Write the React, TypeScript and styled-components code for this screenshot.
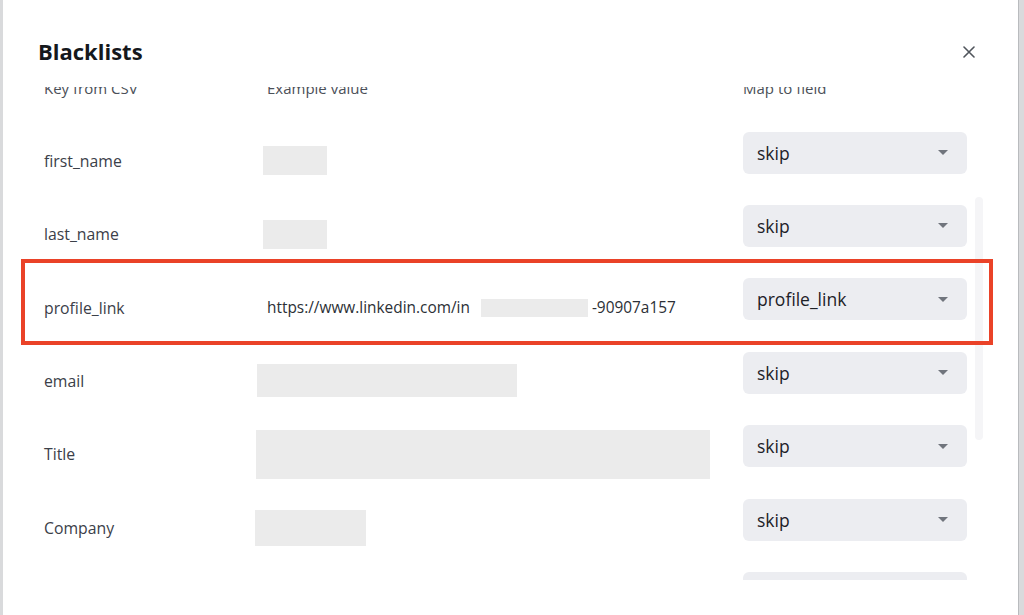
import React, { useLayoutEffect, useRef } from 'react'
import styled, { createGlobalStyle } from 'styled-components'

const GlobalStyle = createGlobalStyle`
  html, body {
    margin: 0;
    height: 100%;
    overflow: hidden;
  }
  body {
    background: #d9dadc;
    font-family: 'Open Sans', 'Noto Sans', sans-serif;
  }
`

const Backdrop = styled.div`
  height: 615px;
  display: flex;
  padding: 0 6px 0 3px;
`

const Modal = styled.div`
  position: relative;
  flex: 1;
  background: #ffffff;
  display: flex;
  flex-direction: column;
  box-shadow: 1px 0 0 #b9bbbe;
`

const Header = styled.div`
  display: flex;
  align-items: center;
  justify-content: space-between;
  padding: 36px 43px 21px 35px;
`

const Title = styled.h1`
  margin: 0;
  font-size: 22px;
  line-height: 30px;
  font-weight: 700;
  color: #15181c;
`

const CloseButton = styled.button`
  border: 0;
  background: none;
  padding: 0;
  margin-top: 1px;
  width: 12px;
  height: 12px;
  display: flex;
  cursor: pointer;
`

const Body = styled.div`
  height: 493px;
  overflow: hidden;
  padding: 0 51px 0 41px;
`

const Table = styled.div`
  display: grid;
  grid-template-columns: 223px 476px 224px;
`

const HeadCell = styled.div`
  height: 48.6px;
  padding-top: 2px;
  box-sizing: border-box;
  font-size: 15px;
  line-height: 22px;
  color: #4b5058;
`

const Cell = styled.div`
  height: 73.4px;
  display: flex;
  align-items: center;
  padding-top: 1px;
  box-sizing: border-box;
  font-size: 15.8px;
  color: #3b4049;
`

const ValueCell = styled(Cell)`
  font-size: 15.4px;
  color: #2c3036;
`

const SelectCell = styled.div`
  height: 73.4px;
  padding-top: 8px;
  box-sizing: border-box;
`

const Select = styled.div`
  height: 42px;
  border-radius: 6px;
  background: #ecedf1;
  display: flex;
  align-items: center;
  justify-content: space-between;
  padding: 0 19px 0 14px;
  font-size: 17.5px;
  color: #1d2127;
`

const Caret = styled.span`
  width: 0;
  height: 0;
  border-left: 5.5px solid transparent;
  border-right: 5.5px solid transparent;
  border-top: 5.5px solid #70757d;
`

const Redacted = styled.span<{ $w: number; $h: number; $shift: number }>`
  display: inline-block;
  width: ${p => p.$w}px;
  height: ${p => p.$h}px;
  margin-left: ${p => p.$shift}px;
  background: #ebebeb;
`

const InlineRedacted = styled.span`
  display: inline-block;
  width: 107px;
  height: 18px;
  margin: 0 4px 0 11px;
  background: #ebebeb;
`

const Highlight = styled.div`
  position: absolute;
  left: 18px;
  top: 259px;
  width: 972px;
  height: 86px;
  box-sizing: border-box;
  border: 4px solid #ea4228;
  pointer-events: none;
`

const ScrollThumb = styled.div`
  position: absolute;
  left: 972px;
  top: 197px;
  width: 8px;
  height: 243px;
  border-radius: 4px;
  background: #f5f5f7;
`

type Row = {
  key: string
  field: string
  value?: React.ReactNode
}

const rows: Row[] = [
  { key: 'first_name', field: 'skip', value: <Redacted $w={64} $h={29} $shift={-4} /> },
  { key: 'last_name', field: 'skip', value: <Redacted $w={64} $h={29} $shift={-4} /> },
  {
    key: 'profile_link',
    field: 'profile_link',
    value: (
      <>
        https://www.linkedin.com/in
        <InlineRedacted />
        -90907a157
      </>
    )
  },
  { key: 'email', field: 'skip', value: <Redacted $w={260} $h={33} $shift={-10} /> },
  { key: 'Title', field: 'skip', value: <Redacted $w={454} $h={49} $shift={-11} /> },
  { key: 'Company', field: 'skip', value: <Redacted $w={111} $h={36} $shift={-12} /> },
  { key: 'Location', field: 'skip', value: <Redacted $w={140} $h={29} $shift={-10} /> },
  { key: 'Industry', field: 'skip', value: <Redacted $w={120} $h={29} $shift={-10} /> }
]

export default function App () {
  const bodyRef = useRef<HTMLDivElement>(null)

  useLayoutEffect(() => {
    if (bodyRef.current) bodyRef.current.scrollTop = 12
  }, [])

  return (
    <>
      <GlobalStyle />
      <Backdrop>
        <Modal>
          <Header>
            <Title>Blacklists</Title>
            <CloseButton aria-label='Close'>
              <svg width='12' height='12' viewBox='0 0 12 12'>
                <path d='M1 1L11 11M11 1L1 11' stroke='#50555c' strokeWidth='1.6' strokeLinecap='round' />
              </svg>
            </CloseButton>
          </Header>
          <Body ref={bodyRef}>
            <Table>
              <HeadCell>Key from CSV</HeadCell>
              <HeadCell>Example value</HeadCell>
              <HeadCell>Map to field</HeadCell>
              {rows.map(row => (
                <React.Fragment key={row.key}>
                  <Cell>{row.key}</Cell>
                  <ValueCell>{row.value}</ValueCell>
                  <SelectCell>
                    <Select>
                      {row.field}
                      <Caret />
                    </Select>
                  </SelectCell>
                </React.Fragment>
              ))}
            </Table>
          </Body>
          <ScrollThumb />
          <Highlight />
        </Modal>
      </Backdrop>
    </>
  )
}
